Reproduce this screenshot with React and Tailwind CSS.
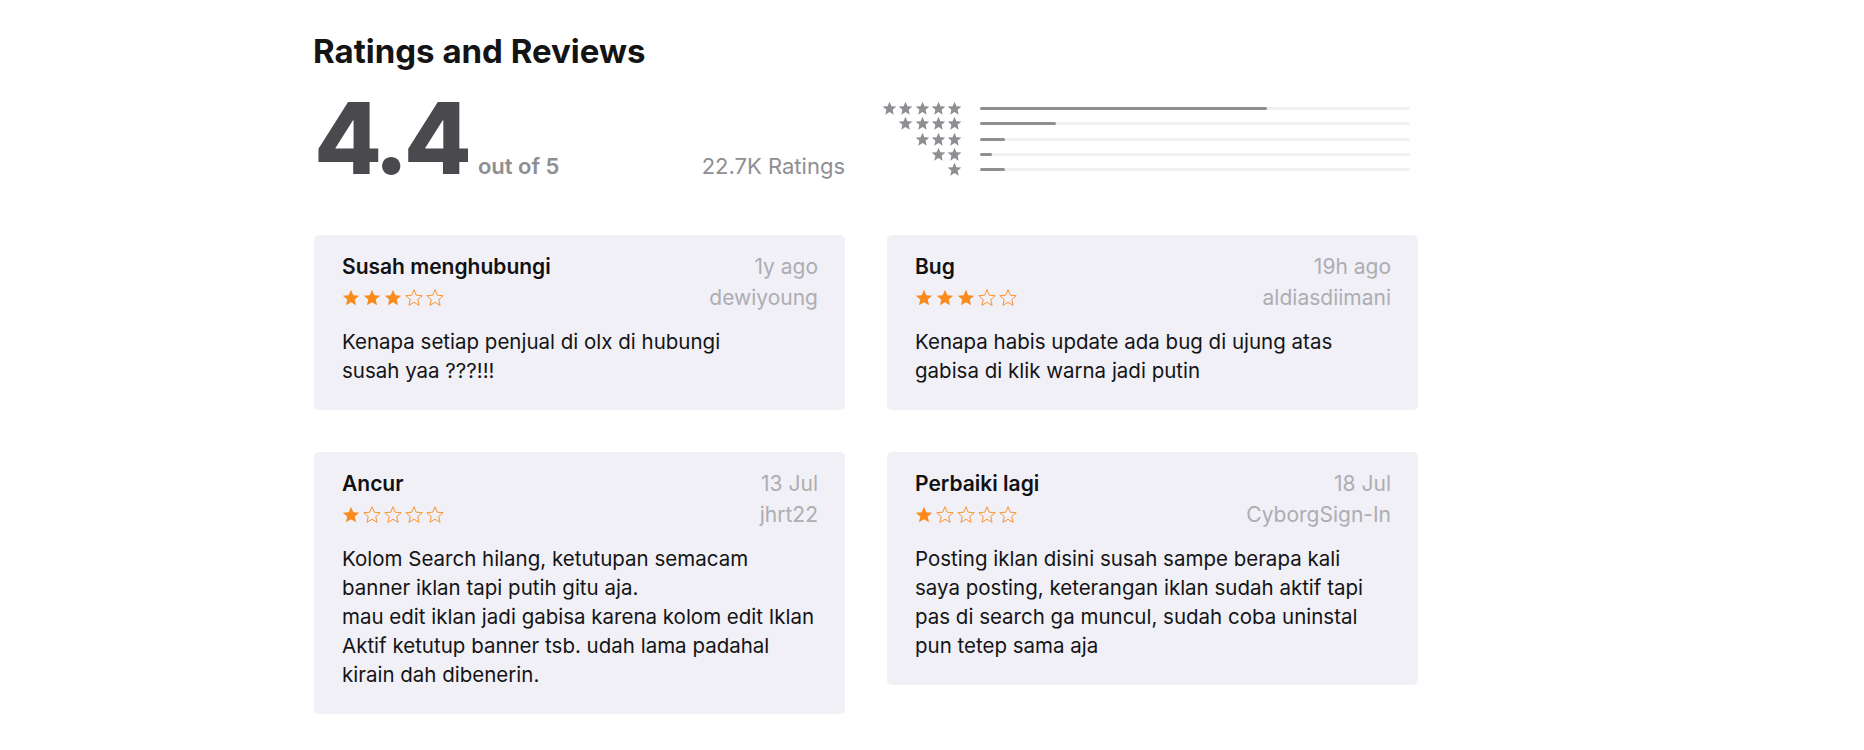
import React from 'react';

const STAR = '12,1 15.06,8.29 22.94,8.95 16.95,14.11 18.76,21.8 12,17.7 5.24,21.8 7.05,14.11 1.06,8.95 8.94,8.29';

function Star({ filled, className }) {
  return (
    <svg viewBox="0 0 24 24" className={className}>
      <polygon
        points={STAR}
        fill={filled ? 'currentColor' : 'none'}
        stroke="currentColor"
        strokeWidth={filled ? 0 : 1.2}
        strokeLinejoin="miter"
      />
    </svg>
  );
}

const histogram = [
  { stars: 5, pct: 66.8 },
  { stars: 4, pct: 17.7 },
  { stars: 3, pct: 5.8 },
  { stars: 2, pct: 2.7 },
  { stars: 1, pct: 5.8 },
];

const reviews = [
  {
    title: 'Susah menghubungi',
    date: '1y ago',
    user: 'dewiyoung',
    rating: 3,
    lines: ['Kenapa setiap penjual di olx di hubungi', 'susah yaa ???!!!'],
  },
  {
    title: 'Bug',
    date: '19h ago',
    user: 'aldiasdiimani',
    rating: 3,
    lines: ['Kenapa habis update ada bug di ujung atas', 'gabisa di klik warna jadi putin'],
  },
  {
    title: 'Ancur',
    date: '13 Jul',
    user: 'jhrt22',
    rating: 1,
    lines: [
      'Kolom Search hilang, ketutupan semacam',
      'banner iklan tapi putih gitu aja.',
      'mau edit iklan jadi gabisa karena kolom edit Iklan',
      'Aktif ketutup banner tsb. udah lama padahal',
      'kirain dah dibenerin.',
    ],
  },
  {
    title: 'Perbaiki lagi',
    date: '18 Jul',
    user: 'CyborgSign-In',
    rating: 1,
    lines: [
      'Posting iklan disini susah sampe berapa kali',
      'saya posting, keterangan iklan sudah aktif tapi',
      'pas di search ga muncul, sudah coba uninstal',
      'pun tetep sama aja',
    ],
  },
];

function ReviewCard({ review }) {
  return (
    <div className="bg-[#f0f0f6] rounded-[5px] pl-[28px] pr-[27px] pt-[18px] pb-[25px]">
      <div className="flex justify-between">
        <div>
          <div className="text-[21px] leading-[28px] font-semibold text-[#111113]">{review.title}</div>
          <div className="flex gap-[3px] mt-[8px] text-[#fb8a1c]">
            {[1, 2, 3, 4, 5].map((i) => (
              <Star key={i} filled={i <= review.rating} className="w-[18px] h-[18px]" />
            ))}
          </div>
        </div>
        <div className="text-right text-[21px] text-[#adadb2]">
          <div className="leading-[28px]">{review.date}</div>
          <div className="leading-[28px] mt-[3px]">{review.user}</div>
        </div>
      </div>
      <div className="mt-[15px] text-[20.5px] leading-[29px] text-[#141416]">
        {review.lines.map((l, i) => (
          <div key={i} className="whitespace-nowrap">{l}</div>
        ))}
      </div>
    </div>
  );
}

export default function App() {
  return (
    <div className="min-h-screen bg-white font-['Inter',sans-serif]">
      <div className="pl-[314px] pt-[31px]">
        <h1 className="text-[33px] leading-[40px] font-bold text-[#141414] -ml-[1px]">Ratings and Reviews</h1>

        {/* summary */}
        <div className="flex items-start mt-[18px]">
          <div className="w-[531px] flex items-baseline justify-between">
            <div className="flex items-baseline">
              <span className="text-[99px] leading-[99px] font-extrabold text-[#4a4a4e] tracking-[-5px]">4.4</span>
              <span className="ml-[11px] text-[22px] font-semibold text-[#8e8e93]">out of 5</span>
            </div>
            <span className="text-[22px] text-[#8e8e93]">22.7K Ratings</span>
          </div>

          <div className="ml-[34px] pt-[12px]">
            {histogram.map((row) => (
              <div key={row.stars} className="h-[15.25px] flex items-center">
                <div className="w-[83px] flex justify-end gap-[1.2px] text-[#8e8e93]">
                  {Array.from({ length: row.stars }).map((_, i) => (
                    <Star key={i} filled className="w-[15px] h-[15px]" />
                  ))}
                </div>
                <div className="ml-[18px] w-[430px] h-[3px] rounded-full bg-[#efeff4]">
                  <div className="h-full rounded-full bg-[#8e8e93]" style={{ width: `${row.pct}%` }} />
                </div>
              </div>
            ))}
          </div>
        </div>

        {/* reviews */}
        <div className="grid grid-cols-[531px_531px] gap-x-[42px] gap-y-[42px] items-start mt-[47px]">
          {reviews.map((r) => (
            <ReviewCard key={r.title} review={r} />
          ))}
        </div>
      </div>
    </div>
  );
}
